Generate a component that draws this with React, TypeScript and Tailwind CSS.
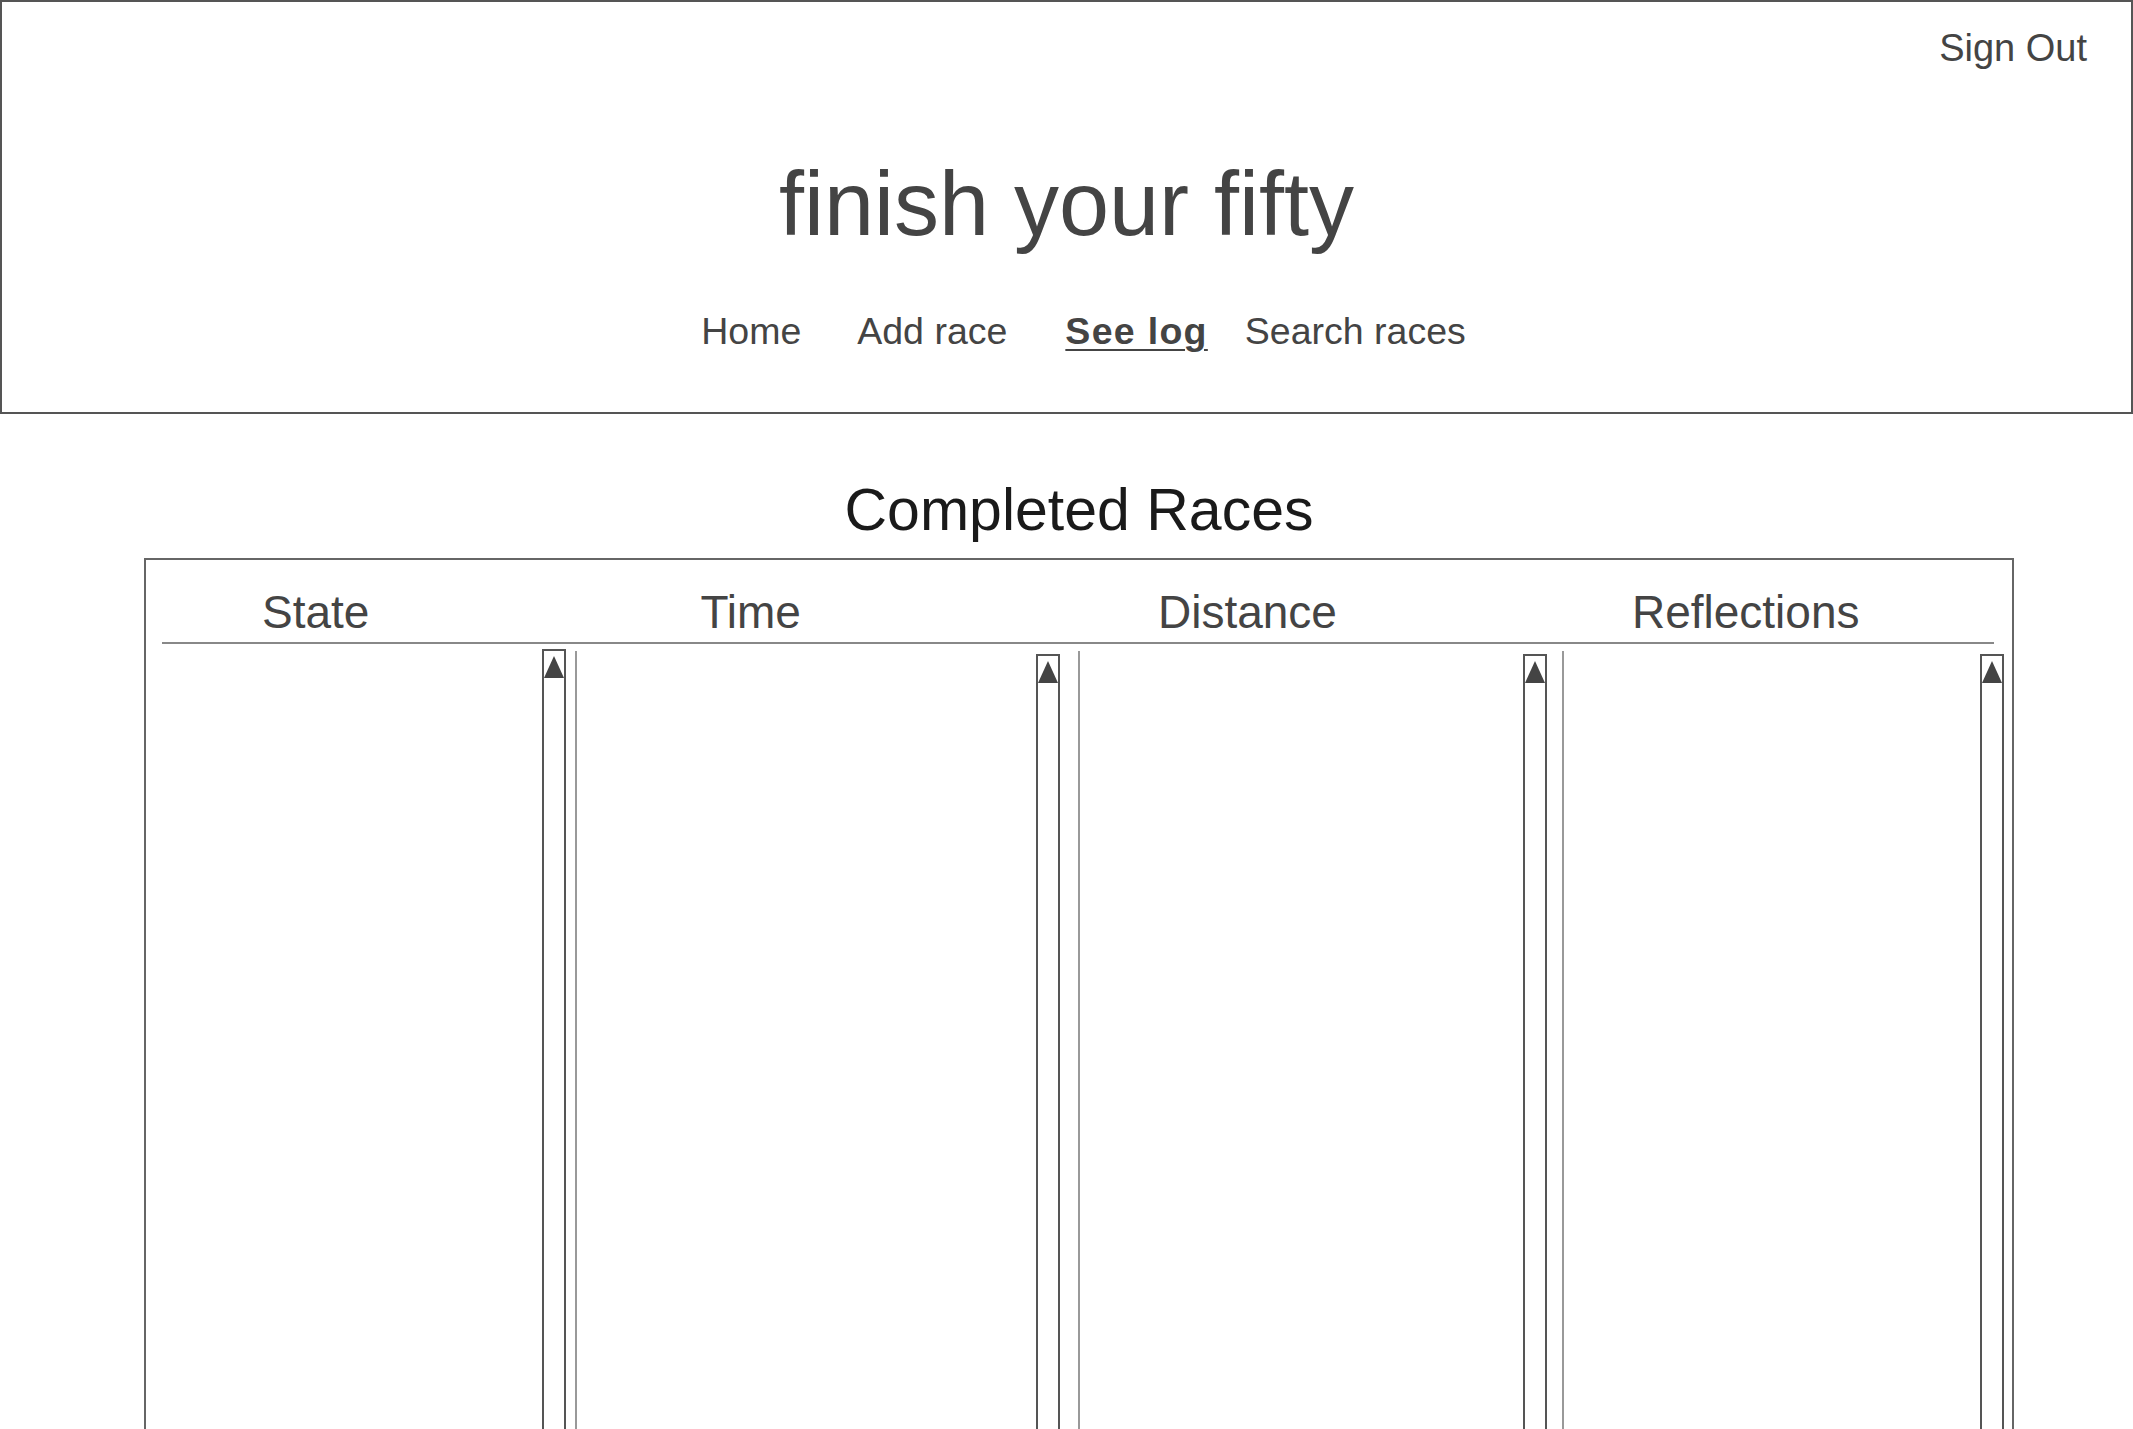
import React from "react";

const headers = [
  { label: "State", ml: "ml-[100px]" },
  { label: "Time", ml: "ml-[331px]" },
  { label: "Distance", ml: "ml-[357px]" },
  { label: "Reflections", ml: "ml-[295px]" },
];

const ScrollBar: React.FC<{ offset?: boolean }> = ({ offset }) => (
  <div
    className={
      "w-[24px] h-full border-2 border-[#555] flex justify-center pt-[5px] " +
      (offset ? "mt-[3px]" : "")
    }
  >
    <svg width="20" height="22" viewBox="0 0 20 22" className="block">
      <polygon points="10,0 20,22 0,22" fill="#444" />
    </svg>
  </div>
);

export default function App() {
  return (
    <div className="min-h-screen bg-white font-['Liberation_Sans',Arial,sans-serif] text-[#444]">
      <header className="h-[414px] border-2 border-[#555] flex flex-col">
        <div className="flex justify-end pr-[44px] pt-[27px]">
          <a href="#" className="text-[38px] leading-none">
            Sign Out
          </a>
        </div>
        <h1 className="mt-[92px] text-center text-[90px] leading-none">
          finish your fifty
        </h1>
        <nav className="mt-[64px] flex justify-center pl-[34px] text-[37.5px] leading-none">
          <a href="#">Home</a>
          <a href="#" className="ml-[56px]">
            Add race
          </a>
          <a
            href="#"
            className="ml-[58px] font-bold underline underline-offset-[5px] decoration-2 tracking-[1.3px]"
          >
            See log
          </a>
          <a href="#" className="ml-[37px]">
            Search races
          </a>
        </nav>
      </header>

      <main className="pl-[144px] pr-[119px]">
        <h2 className="mt-[67px] text-center text-[59px] leading-none text-[#1a1a1a]">
          Completed Races
        </h2>
        <div className="mt-[18px] h-[900px] border-2 border-[#666] flex flex-col">
          <div className="ml-[16px] mr-[18px] pt-[29px] pb-[7px] border-b-2 border-[#888] flex text-[46px] leading-none">
            {headers.map((h) => (
              <span key={h.label} className={h.ml}>
                {h.label}
              </span>
            ))}
          </div>
          <div className="mt-[5px] flex flex-1 min-h-0">
            <div className="w-[429px] flex justify-end pr-[9px]">
              <ScrollBar />
            </div>
            <div className="w-[503px] border-l-2 border-[#999] mt-[2px] flex justify-end pr-[18px]">
              <ScrollBar offset />
            </div>
            <div className="w-[484px] border-l-2 border-[#999] mt-[2px] flex justify-end pr-[15px]">
              <ScrollBar offset />
            </div>
            <div className="flex-1 border-l-2 border-[#999] mt-[2px] flex justify-end pr-[8px]">
              <ScrollBar offset />
            </div>
          </div>
        </div>
      </main>
    </div>
  );
}
